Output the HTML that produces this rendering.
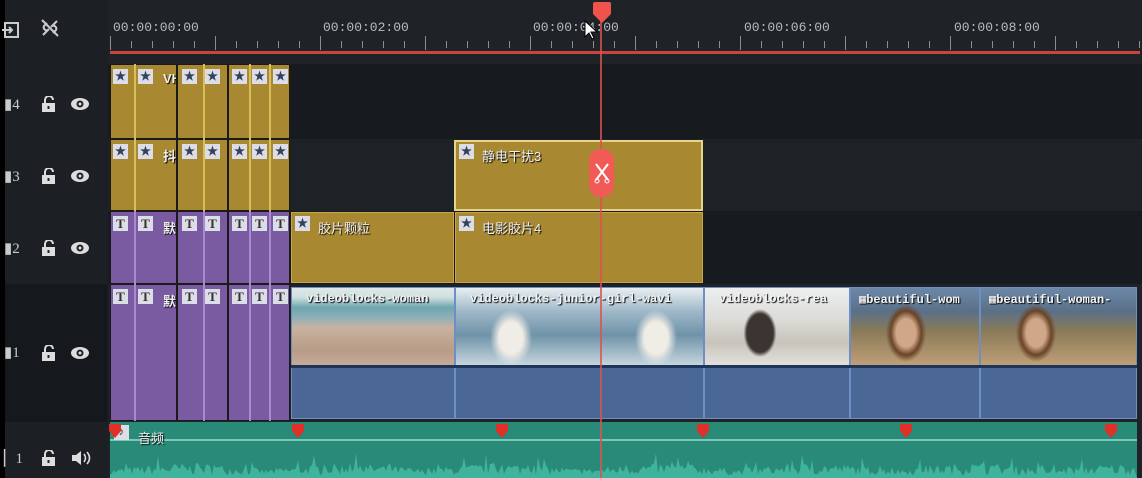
<!DOCTYPE html>
<html><head><meta charset="utf-8"><style>
*{margin:0;padding:0;box-sizing:border-box}
body{width:1142px;height:478px;overflow:hidden;background:#1f2328;position:relative;font-family:"Liberation Sans","Noto Sans CJK SC",sans-serif}
.a{position:absolute}
.lbl{color:#b8bcc0;font-family:"Liberation Mono",monospace;font-size:13px;top:20px}
.tk{position:absolute;width:1px;background:#8a8e92}
.ic{position:absolute;width:15px;height:15px;background:#dcdde6;color:#333;font:bold 13px "Liberation Serif",serif;text-align:center;line-height:15px}
.star{font-size:12px;line-height:15px;color:#34415a}
.vc{position:absolute;top:287px;height:132px;background:#4a6796;border:1px solid #6f8fc4}
.th{position:absolute;left:0;right:0;top:0;height:78px}
.vt{position:absolute;top:4px;color:#f4f4f4;font:bold 12px "Liberation Mono",monospace;white-space:nowrap;overflow:hidden;text-shadow:1px 1px 1px #000}
.num{color:#c8cacc;font:15px "Liberation Serif",serif}
.cn{color:#eee;font-size:13px;text-shadow:1px 1px 1px #000}
</style></head><body>
<div class="a" style="left:0;top:0;width:5px;height:478px;background:#000"></div>
<div class="a" style="left:5px;top:0;width:103px;height:478px;background:#1c2024"></div>
<div class="a" style="left:108px;top:64px;width:1034px;height:75px;background:#171b20"></div>
<div class="a" style="left:108px;top:139px;width:1034px;height:72px;background:#1d2227"></div>
<div class="a" style="left:108px;top:211px;width:1034px;height:73px;background:#171b20"></div>
<div class="a" style="left:5px;top:284px;width:103px;height:138px;background:#15181c"></div>
<svg class="a" style="left:2px;top:18px" width="20" height="22"><rect x="3" y="5" width="13" height="14" fill="none" stroke="#ccc" stroke-width="2"/><path d="M0 12h10M7 9l3 3-3 3" stroke="#ccc" stroke-width="2" fill="none"/></svg>
<svg class="a" style="left:39px;top:17px" width="22" height="22"><path d="M4 18l6-6M12 10l6-6M8 6l-3 3a3 3 0 0 0 4 4M14 16l3-3a3 3 0 0 0-4-4M3 3l16 16" stroke="#ccc" stroke-width="2" fill="none"/></svg>
<div class="a lbl" style="left:113px">00:00:00:00</div>
<div class="a lbl" style="left:323px">00:00:02:00</div>
<div class="a lbl" style="left:533px">00:00:04:00</div>
<div class="a lbl" style="left:744px">00:00:06:00</div>
<div class="a lbl" style="left:954px">00:00:08:00</div>
<div id="ticks"></div>
<div class="a" style="left:110px;top:51px;width:1030px;height:3px;background:#c9433f"></div>
<div class="a" style="left:4px;top:95px"><span class="num">▮4</span></div>
<div class="a" style="left:4px;top:167px"><span class="num">▮3</span></div>
<div class="a" style="left:4px;top:239px"><span class="num">▮2</span></div>
<div class="a" style="left:4px;top:343px"><span class="num">▮1</span></div>
<div class="a" style="left:4px;top:449px"><span class="num">▏1</span></div>
<svg width="0" height="0" style="position:absolute"><defs>
<g id="lk"><path d="M3 7V4a4 4 0 0 1 8 0" stroke="#ddd" stroke-width="2" fill="none"/><rect x="0" y="7" width="13" height="9" fill="#ddd"/><rect x="5.5" y="10" width="2" height="3" fill="#222"/></g>
<g id="ey"><ellipse cx="9" cy="6" rx="9" ry="6" fill="#ddd"/><circle cx="9" cy="6" r="3.5" fill="#222"/><circle cx="9" cy="6" r="1.5" fill="#ddd"/></g>
</defs></svg>
<svg class="a" style="left:42px;top:96px" width="14" height="17"><use href="#lk"/></svg>
<svg class="a" style="left:71px;top:98px" width="19" height="12"><use href="#ey"/></svg>
<svg class="a" style="left:42px;top:168px" width="14" height="17"><use href="#lk"/></svg>
<svg class="a" style="left:71px;top:170px" width="19" height="12"><use href="#ey"/></svg>
<svg class="a" style="left:42px;top:240px" width="14" height="17"><use href="#lk"/></svg>
<svg class="a" style="left:71px;top:242px" width="19" height="12"><use href="#ey"/></svg>
<svg class="a" style="left:42px;top:345px" width="14" height="17"><use href="#lk"/></svg>
<svg class="a" style="left:71px;top:347px" width="19" height="12"><use href="#ey"/></svg>
<svg class="a" style="left:42px;top:450px" width="14" height="17"><use href="#lk"/></svg>
<svg class="a" style="left:71px;top:450px" width="20" height="16"><path d="M1 5h4l5-4v14l-5-4H1z" fill="#ddd"/><path d="M13 4q3 4 0 8M16 2q5 6 0 12" stroke="#ddd" stroke-width="1.6" fill="none"/></svg>
<div id="grp"></div>
<div class="a" style="left:454px;top:140px;width:249px;height:71px;background:#a88932;border:2px solid #e8d488"></div>
<div class="ic star" style="left:459px;top:144px">★</div>
<div class="a cn" style="left:482px;top:146px">静电干扰3</div>
<div class="a" style="left:291px;top:212px;width:163px;height:71px;background:#a88932;border:1px solid #c7a64a"></div>
<div class="ic star" style="left:295px;top:216px">★</div>
<div class="a cn" style="left:318px;top:218px">胶片颗粒</div>
<div class="a" style="left:455px;top:212px;width:248px;height:71px;background:#a88932;border:1px solid #c7a64a"></div>
<div class="ic star" style="left:459px;top:216px">★</div>
<div class="a cn" style="left:482px;top:218px">电影胶片4</div>
<div class="vc" style="left:291px;width:164px"><div class="th" style="background:linear-gradient(180deg,#dfe8e8 0,#cfe0e0 12%,#6fa6b0 25%,#8fb0b8 38%,#c8b2a0 50%,#b89c88 80%,#c8aa98 100%)"></div><div class="vt" style="left:14px;width:148px">videoblocks-woman</div></div>
<div class="vc" style="left:455px;width:249px"><div class="th" style="background:radial-gradient(ellipse 30px 40px at 55px 50px,#f0ece6 40%,transparent 70%),radial-gradient(ellipse 30px 40px at 200px 50px,#f0ece6 40%,transparent 70%),linear-gradient(180deg,#e8eef2 0,#9fb8c8 30%,#6f93a8 60%,#c8d8e0 100%)"></div><div class="vt" style="left:14px;width:232px">videoblocks-junior-girl-wavi</div></div>
<div class="vc" style="left:704px;width:146px"><div class="th" style="background:radial-gradient(ellipse 22px 32px at 55px 45px,#3c3430 60%,transparent 75%),linear-gradient(180deg,#eceef0 0,#dcdcd8 40%,#c8c4bc 70%,#e4e2de 100%)"></div><div class="vt" style="left:14px;width:130px">videoblocks-rea</div></div>
<div class="vc" style="left:850px;width:130px"><div class="th" style="background:radial-gradient(ellipse 28px 40px at 55px 45px,#d0a888 35%,#6a4428 55%,transparent 72%),linear-gradient(180deg,#6c88a8 0,#5a7088 30%,#8a7a58 55%,#c0a078 100%)"></div><div class="vt" style="left:8px;width:120px">▦beautiful-wom</div></div>
<div class="vc" style="left:980px;width:157px"><div class="th" style="background:radial-gradient(ellipse 28px 40px at 55px 45px,#d0a888 35%,#6a4428 55%,transparent 72%),linear-gradient(180deg,#6c88a8 0,#5a7088 30%,#8a7a58 55%,#c0a078 100%)"></div><div class="vt" style="left:8px;width:148px">▦beautiful-woman-</div></div>
<div class="a" style="left:291px;top:365px;width:846px;height:3px;background:#1e3458"></div>
<div class="a" style="left:110px;top:422px;width:1027px;height:56px;background:#2a8a78"></div>
<div class="a" style="left:110px;top:439px;width:1027px;height:2px;background:#7cc8b8"></div>
<svg class="a" style="left:110px;top:441px" width="1027" height="37" id="wave"></svg>
<div class="a ic" style="left:114px;top:425px;font-size:11px">♪</div>
<div class="a cn" style="left:138px;top:428px">音频</div>
<div id="mk"></div>
<div class="a" style="left:600px;top:10px;width:2px;height:468px;background:#d9534f;opacity:.8"></div>
<svg class="a" style="left:592px;top:2px" width="20" height="22"><path d="M1 2q0-2 2-2h14q2 0 2 2v10l-9 9-9-9z" fill="#f0524c"/></svg>
<div class="a" style="left:589px;top:149px;width:25px;height:48px;border-radius:12px;background:#f15a56"></div>
<svg class="a" style="left:593px;top:162px" width="18" height="22"><path d="M3 2l12 16M15 2L3 18" stroke="#fff" stroke-width="2"/><circle cx="4" cy="19" r="2" fill="none" stroke="#fff"/><circle cx="14" cy="19" r="2" fill="none" stroke="#fff"/></svg>
<svg class="a" style="left:584px;top:20px" width="14" height="22"><path d="M1 1v16l4-4 3 6 2-1-3-6h6z" fill="#fff" stroke="#000" stroke-width="1"/></svg>
<script>
var h='';
for(var x=110,i=0;x<1140;x+=21,i++){var big=i%5==0;h+='<div class="tk" style="left:'+x+'px;top:'+(big?36:41)+'px;height:'+(big?14:7)+'px"></div>';}
document.getElementById('ticks').innerHTML=h;
var g='';
[[64,75,'#a88932','#d9bf5c','★','VH'],[139,72,'#a88932','#d9bf5c','★','抖'],[211,73,'#7a5aa0','#a98ad0','T','默'],[284,137,'#7a5aa0','#a98ad0','T','默']].forEach(function(r){
 g+='<div class="a" style="left:110px;top:'+r[0]+'px;width:180px;height:'+r[1]+'px;background:'+r[2]+';border:1px solid #1a1a1a"></div>';
 [134,203,249,269].forEach(function(x){g+='<div class="a" style="left:'+x+'px;top:'+r[0]+'px;width:2px;height:'+r[1]+'px;background:'+r[3]+'"></div>'});
 [176,227].forEach(function(x){g+='<div class="a" style="left:'+x+'px;top:'+r[0]+'px;width:2px;height:'+r[1]+'px;background:#1a1a1a"></div>'});
 [113,138,182,205,232,252,273].forEach(function(x){g+='<div class="ic'+(r[4]=='★'?' star':'')+'" style="left:'+x+'px;top:'+(r[0]+5)+'px">'+r[4]+'</div>'});
 g+='<div class="a cn" style="left:163px;top:'+(r[0]+7)+'px;width:13px;overflow:hidden;font-weight:bold">'+r[5]+'</div>';
});
document.getElementById('grp').innerHTML=g;
var m='';[115,298,502,703,906,1111].forEach(function(x){m+='<svg class="a" style="left:'+(x-7)+'px;top:423px" width="14" height="16"><path d="M1 1h12v7l-6 7-6-7z" fill="#e0302a"/></svg>'});
document.getElementById('mk').innerHTML=m;
var p='M0 37',s=7;function rnd(){s=(s*16807)%2147483647;return s/2147483647;}
for(var x=0;x<=1027;x+=2){var env=0.5+0.5*Math.abs(Math.sin(x*0.02));var v=3+rnd()*12*env+(rnd()<0.08?10*env:0);p+=' L'+x+' '+(37-v).toFixed(1);}p+=' L1027 37Z';
document.getElementById('wave').innerHTML='<path d="'+p+'" fill="#3fb39c"/>';
</script>
</body></html>
